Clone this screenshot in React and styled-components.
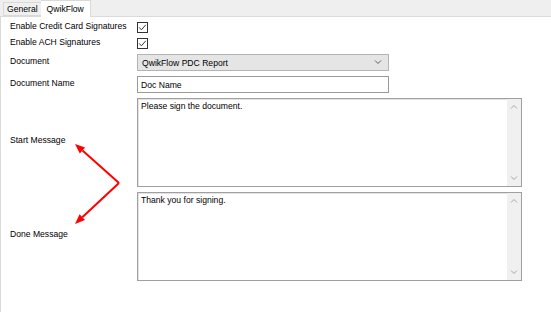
import styled, { createGlobalStyle } from 'styled-components';

const Global = createGlobalStyle`
  html, body {
    margin: 0;
    padding: 0;
    background: #ffffff;
  }
  body {
    font-family: "Liberation Sans", Arial, sans-serif;
    font-size: 8.6px;
    color: #000;
  }
`

const Check = () => (
  <svg width="11" height="11" viewBox="0 0 11 11">
    <rect x="0.5" y="0.5" width="10" height="10" fill="#fff" stroke="#333" />
    <path d="M2.2 5.4 L4.4 7.8 L8.8 2.8" fill="none" stroke="#333" strokeWidth="1" />
  </svg>
)

const Chevron = ({ up, dark }) => (
  <svg width="8" height="5" viewBox="0 0 8 5">
    <path
      d={up ? 'M1 4.5 L4 1.5 L7 4.5' : 'M1 0.5 L4 3.5 L7 0.5'}
      fill="none"
      stroke={dark ? '#606060' : '#a6a6a6'}
      strokeWidth="1"
    />
  </svg>
)

const TextBox = ({ children }) => (
  <Memo>
    <MemoText>{children}</MemoText>
    <ScrollBar>
      <Chevron up />
      <Chevron />
    </ScrollBar>
  </Memo>
)

// red annotation arrows drawn over the form
const Arrows = () => (
  <ArrowLayer width="551" height="312" viewBox="0 0 551 312">
    <path d="M119 183 L82.5 150.6" stroke="#f00" strokeWidth="2" fill="none" />
    <polygon points="75,144 85.1,147.6 79.8,153.6" fill="#f00" />
    <path d="M119 183 L82.3 217.2" stroke="#f00" strokeWidth="2" fill="none" />
    <polygon points="75,224 85,220.1 79.6,214.3" fill="#f00" />
  </ArrowLayer>
)

export default function App() {
  return (
    <Root>
      <Global />
      <TabStrip>
        <Tab>General</Tab>
        <Tab $active>QwikFlow</Tab>
      </TabStrip>
      <Page>
        <Form>
          <Label>Enable Credit Card Signatures</Label>
          <Field><Check /></Field>
          <Label>Enable ACH Signatures</Label>
          <Field><Check /></Field>
          <Label>Document</Label>
          <Select>
            <span>QwikFlow PDC Report</span>
            <Chevron dark />
          </Select>
          <Label>Document Name</Label>
          <Input>Doc Name</Input>
          <Label $lift={2}>Start Message</Label>
          <TextBox>Please sign the document.</TextBox>
          <Label $lift={2}>Done Message</Label>
          <TextBox>Thank you for signing.</TextBox>
        </Form>
      </Page>
      <Arrows />
    </Root>
  )
}

const Root = styled.div`
  position: relative;
  width: 551px;
  height: 312px;
  overflow: hidden;
`
const TabStrip = styled.div`
  height: 16px;
  display: flex;
  align-items: flex-end;
  padding-left: 3px;
  background: #efefef;
  border-bottom: 1px solid #dadada;
`
const Tab = styled.div`
  height: ${p => (p.$active ? '17px' : '14px')};
  margin-bottom: ${p => (p.$active ? '-1px' : '0')};
  padding: 0 ${p => (p.$active ? '6px' : '3px')};
  display: flex;
  align-items: center;
  box-sizing: border-box;
  background: ${p => (p.$active ? '#ffffff' : '#f0f0f0')};
  border: 1px solid #d9d9d9;
  border-bottom: ${p => (p.$active ? 'none' : '1px solid #d9d9d9')};
  ${p => (p.$active ? 'border-left: none;' : 'border-right: none;')}
`
const Page = styled.div`
  height: 295px;
  border-left: 1px solid #dadada;
  padding: 5px 0 0 9px;
  box-sizing: border-box;
`
const Form = styled.div`
  display: grid;
  grid-template-columns: 127px 385px;
  row-gap: 5px;
  align-items: center;
`
const Label = styled.div`
  white-space: nowrap;
  line-height: 11px;
  margin-top: -${p => (p.$lift || 1) * 2}px;
`
const Field = styled.div`
  height: 11px;
  display: flex;
`
const Select = styled.div`
  height: 17px;
  width: 252px;
  box-sizing: border-box;
  padding: 0 6px 0 4px;
  display: flex;
  align-items: center;
  justify-content: space-between;
  background: #e5e5e5;
  border: 1px solid #b4b4b4;
`
const Input = styled.div`
  height: 17px;
  width: 252px;
  box-sizing: border-box;
  padding: 0 3px;
  display: flex;
  align-items: center;
  background: #fff;
  border: 1px solid #9a9a9a;
`
const Memo = styled.div`
  height: 89px;
  box-sizing: border-box;
  display: flex;
  background: #fff;
  border: 1px solid #a0a0a0;
  box-shadow: inset 1px 1px 0 #e3e3e3;
`
const MemoText = styled.div`
  flex: 1;
  padding: 2px 3px;
  line-height: 11px;
`
const ScrollBar = styled.div`
  width: 14px;
  background: #f0f0f0;
  display: flex;
  flex-direction: column;
  align-items: center;
  justify-content: space-between;
  padding: 5px 0 5px;
`
const ArrowLayer = styled.svg`
  position: absolute;
  left: 0;
  top: 0;
  pointer-events: none;
`
